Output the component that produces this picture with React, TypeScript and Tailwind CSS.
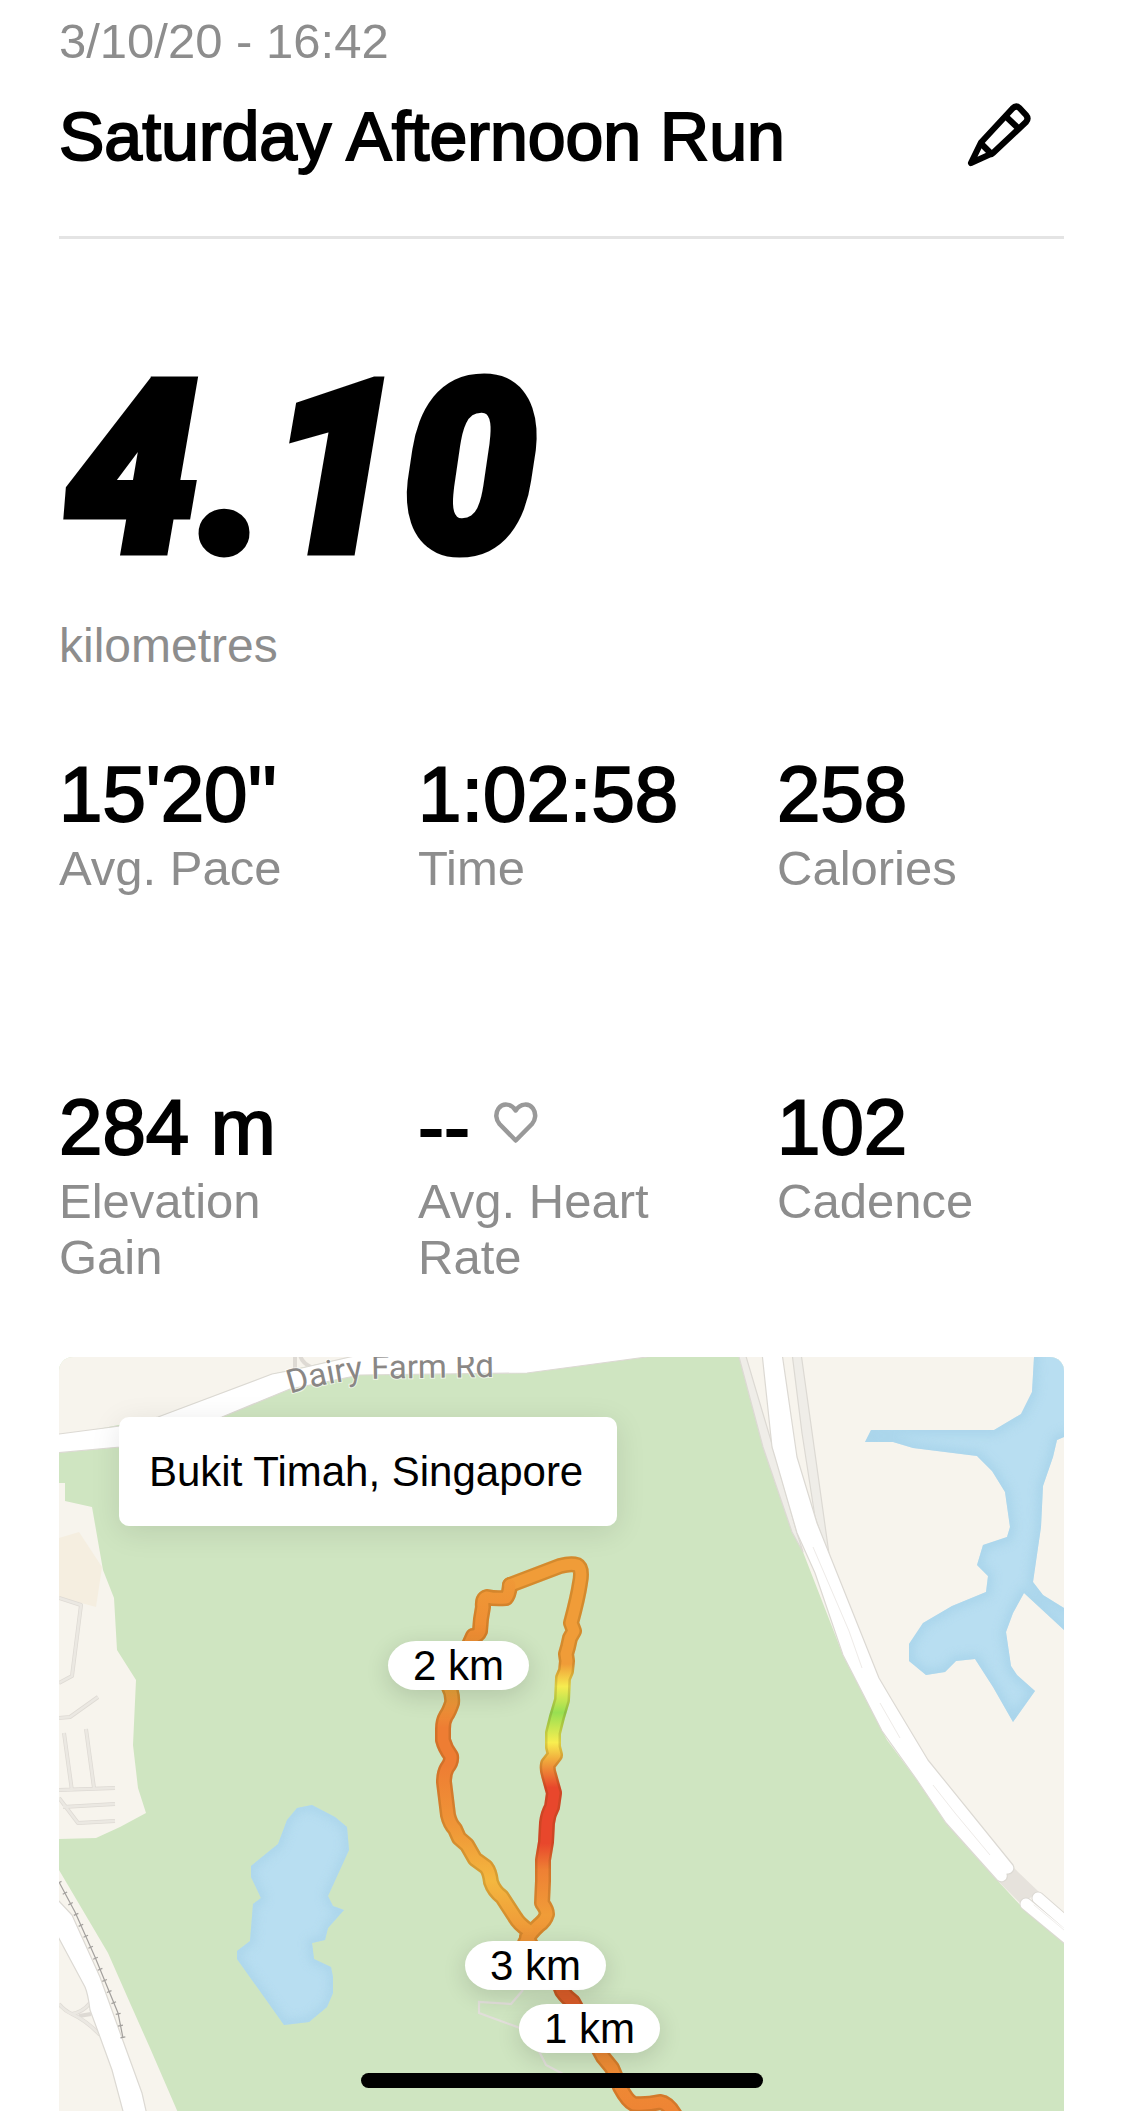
import type { ReactNode } from 'react'

interface Stat {
  label: string
  value: string
  icon?: ReactNode
}

interface Marker {
  label: string
  position: string
}

const stats: Stat[] = [
  { label: 'Avg. Pace', value: "15'20''" },
  { label: 'Time', value: '1:02:58' },
  { label: 'Calories', value: '258' },
  { label: 'Elevation Gain', value: '284 m' },
  { label: 'Avg. Heart Rate', value: '--', icon: <HeartIcon /> },
  { label: 'Cadence', value: '102' },
]

const markers: Marker[] = [
  { label: '2 km', position: 'left-[329px] top-[284px]' },
  { label: '3 km', position: 'left-[406px] top-[584px]' },
  { label: '1 km', position: 'left-[460px] top-[647px]' },
]

const LAKE =
  'M238 451L253 448L276 460L288 470L290 493L269 539L274 549L285 553L269 571L266 583L253 586L255 602L272 610L274 620V636L268 650L250 665L225 668L178 602V594L191 584L194 547L202 541L192 520V509L219 487L228 463Z'

const RESERVOIR =
  'M975 -20V0L973 35L962 57L935 73H812L806 85H834L854 91L918 99L933 114L946 135L951 170L948 180L924 188L918 208L929 219L927 235L893 249L864 266L850 287V304L867 318L886 315L897 304L916 302L934 330L954 365L976 334L958 318L952 309L947 275L954 256L965 236L1005 273L1025 290V262L1005 251L984 238L974 225L982 170L984 129L994 100L998 83L1005 80L1025 74V-20Z'

const EXPRESSWAY =
  'M703 -4L713 90L716 100L738 176L756 216L784 298L823 374L858 423L887 466L938 523A6 6 0 0 0 948 517A6 6 0 0 0 954 508L869 403L833 343L820 321L774 206L758 166L738 100L723 -4Z'

const DAIRY_FARM_RD =
  'M-4 77L0 77L61 69L99 60L213 17L234 13L291 0L310 -4H612L588 0L468 16L301 18L231 32L163 60L61 90L-4 96Z'

// the run is drawn in three pieces so that each can carry its own pace gradient
const ROUTE_LOWER =
  'M468 580Q472 590 486 607T503 634Q508 641 514 645L544 700L553 711L561 730Q569 745 575 747Q588 748 601 745Q609 746 616 758'
const ROUTE_LEFT =
  'M451 228Q450 238 447 241Q436 242 428 240Q423 241 424 250L422 262L421 274Q419 279 414 279L400 310L389 328Q394 337 393 346Q390 355 387 359Q384 364 384 372V383Q386 391 392 399Q393 405 388 411Q385 416 385 425L389 458Q391 467 396 472L400 481L408 488L416 502L427 510Q431 515 432 525Q435 534 443 540L456 560Q460 567 469 573'
const ROUTE_RIGHT =
  'M451 228L501 209Q512 206 518 208Q524 211 521 226Q519 240 512 266L515 274L511 281L509 290L507 297L508 304L507 314L504 321L503 343L498 360L494 376V390L496 398L489 407Q488 412 490 418L495 436L493 450Q489 457 488 466L487 485L484 503V524L483 546Q488 553 488 557Q486 564 480 568Q470 577 466 586'

function PencilIcon() {
  return (
    <svg viewBox="16 13 66 66" className="size-[66px]" fill="none" stroke="currentColor" strokeWidth="6.200" strokeLinejoin="round" strokeLinecap="round">
      <path d="M21 73L31 52.500L62.500 18.500Q66 15 69.500 18L76 25Q79 28.500 76 32L43 63Z" />
      <path d="M57.500 28L68.500 38.500M31.500 54L41.500 64" />
    </svg>
  )
}

function HeartIcon() {
  return (
    <svg viewBox="0 0 44 42" className="mb-2 h-[42px] w-[44px]" fill="none" stroke="#999999" strokeWidth="4.500" strokeLinejoin="round">
      <path d="M21.700 8.500C17 1 8.500 1 4.500 6.500C1 11.500 2 18 5.500 22L21.700 38.500L38 22C41.500 18 42.500 11.500 39 6.500C35 1 26.500 1 21.700 8.500Z" />
    </svg>
  )
}

function StatItem({ stat }: { stat: Stat }) {
  return (
    <div className="flex flex-col-reverse justify-end gap-0.5">
      <dt className="text-[49px] leading-14 text-[#8d8d8d]">{stat.label}</dt>
      <dd className="flex items-center gap-6 text-[78px] leading-[88px] [-webkit-text-stroke:2px_black]">
        {stat.value}
        {stat.icon}
      </dd>
    </div>
  )
}

function Route({ d, stroke }: { d: string; stroke: string }) {
  return (
    <>
      <path d={d} stroke={stroke} strokeWidth="16" />
      <path d={d} stroke="#5a3c00" strokeOpacity="0.18" strokeWidth="16" />
    </>
  )
}

function MapCanvas() {
  return (
    <svg viewBox="0 0 1005 754" preserveAspectRatio="xMidYMin slice" className="block size-full" aria-hidden="true">
      <defs>
        <clipPath id="lake-clip"><path d={LAKE} /></clipPath>
        <clipPath id="reservoir-clip"><path d={RESERVOIR} /></clipPath>
        <filter id="shore" x="-10%" y="-10%" width="120%" height="120%">
          <feGaussianBlur stdDeviation="5" />
        </filter>
        <path id="dairy-farm-rd" d="M231 37Q270 25 303 22L490 19" />
        <linearGradient id="pace-left" gradientUnits="userSpaceOnUse" x1="0" y1="206" x2="0" y2="580">
          <stop offset="0" stopColor="#f09c38" />
          <stop offset="0.19" stopColor="#ee8d33" />
          <stop offset="0.34" stopColor="#eca33a" />
          <stop offset="0.44" stopColor="#ee7d33" />
          <stop offset="0.54" stopColor="#ee7d33" />
          <stop offset="0.7" stopColor="#ef9537" />
          <stop offset="0.85" stopColor="#f4b73f" />
          <stop offset="1" stopColor="#ee9537" />
        </linearGradient>
        <linearGradient id="pace-right" gradientUnits="userSpaceOnUse" x1="0" y1="206" x2="0" y2="580">
          <stop offset="0" stopColor="#f09c38" />
          <stop offset="0.27" stopColor="#f09c38" />
          <stop offset="0.33" stopColor="#f6ec50" />
          <stop offset="0.4" stopColor="#98df52" />
          <stop offset="0.48" stopColor="#f8ee50" />
          <stop offset="0.53" stopColor="#f0a53b" />
          <stop offset="0.6" stopColor="#e8472c" />
          <stop offset="0.75" stopColor="#e8472c" />
          <stop offset="0.82" stopColor="#ee8034" />
          <stop offset="0.94" stopColor="#f09c38" />
          <stop offset="1" stopColor="#ee9537" />
        </linearGradient>
        <linearGradient id="pace-lower" gradientUnits="userSpaceOnUse" x1="0" y1="580" x2="0" y2="754">
          <stop offset="0" stopColor="#ee9537" />
          <stop offset="0.3" stopColor="#df5f2a" />
          <stop offset="0.42" stopColor="#df5f2a" />
          <stop offset="0.7" stopColor="#ef8d35" />
          <stop offset="1" stopColor="#ee8434" />
        </linearGradient>
      </defs>

      <rect x="-20" y="-20" width="1045" height="800" fill="#cfe5c1" />

      {/* Built-up areas */}
      <g fill="#f7f4ed">
        <path d="M-4 -4H310L213 17L99 60L0 80H-4Z" />
        <path d="M-4 126H6V144L33 150L44 213L55 241L58 293L77 323L74 388L79 431L87 456L61 470L37 481L-4 482Z" />
        <path d="M-4 505L0 513L49 596L71 646L91 691L120 758H-4Z" />
        <path d="M679 -4L704 90L733 175L744 195L784 298L828 383L858 423L887 466L938 523L963 550L1025 600V-20H679Z" />
      </g>
      <path d="M0 181L20 175L43 210L37 250L0 240Z" fill="#f5eee0" />

      {/* Side streets on the left */}
      <g fill="none" strokeLinejoin="round">
        <g stroke="#dedad4" strokeWidth="4">
          <path d="M0 241L22 248L13 319L0 326M0 361L11 360L39 340M5 376L13 434M27 372L35 431M0 433L56 431M4 450L56 447M0 441L19 466L56 464" />
          <path d="M0 647Q6 654 13 657Q28 664 41 678M13 657Q24 655 31 646M20 659L32 657M236 -2V14M241 -2Q243 6 252 10" />
        </g>
        <g stroke="#ebe8e2" strokeWidth="2.500">
          <path d="M0 241L22 248L13 319L0 326M0 361L11 360L39 340M5 376L13 434M27 372L35 431M0 433L56 431M4 450L56 447M0 441L19 466L56 464" />
          <path d="M0 647Q6 654 13 657Q28 664 41 678M13 657Q24 655 31 646" />
        </g>
      </g>

      {/* Roads */}
      <g stroke="#dcd9d3" strokeWidth="1.200" strokeLinejoin="round">
        <path d={DAIRY_FARM_RD} fill="#ffffff" />
        <path d="M-4 540L13 558L41 620L63 681L83 736L88 758H65L53 713L41 680L31 653Q29 637 26 630L-4 574Z" fill="#ffffff" />
        <path d="M679 -4H686L713 87L738 176L744 195L733 175L704 90Z" fill="#efede8" />
        <path d="M733 -4H742L771 204L756 160L743 76Z" fill="#efede8" />
        <path d="M940 525L954 510L980 535L962 547Z" fill="#e6e2dc" stroke="none" />
        <path d={EXPRESSWAY} fill="#ffffff" />
      </g>
      <path d="M754 190L790 274L803 311M821 346L841 381M874 428L896 456L931 498" fill="none" stroke="#eeebe8" strokeWidth="1" />
      <g fill="none" strokeLinecap="round">
        <path d="M979 541L1025 581M967 547L1025 595" stroke="#dcd9d3" strokeWidth="13" />
        <path d="M979 541L1025 581M967 547L1025 595" stroke="#ffffff" strokeWidth="11" />
        <path d="M975 548L1005 573" stroke="#f0eeeb" strokeWidth="1" />
      </g>

      {/* Railway */}
      <g fill="none" stroke="#a3a09d">
        <path d="M0 525L16 555L36 600L59 656L64 681" strokeWidth="1.200" />
        <path d="M0 525L16 555L36 600L59 656L64 681" strokeWidth="5" strokeDasharray="1.200 10.800" />
      </g>

      {/* Water */}
      <path d={LAKE} fill="#b8def1" />
      <g clipPath="url(#lake-clip)">
        <path d={LAKE} fill="none" stroke="#a8d3e9" strokeWidth="9" filter="url(#shore)" opacity="0.8" />
      </g>
      <path d={RESERVOIR} fill="#b8def1" />
      <g clipPath="url(#reservoir-clip)">
        <path d={RESERVOIR} fill="none" stroke="#a5d2e9" strokeWidth="10" filter="url(#shore)" opacity="0.8" />
      </g>

      {/* Footpath */}
      <path d="M464 633L452 647L420 645V656L461 671L481 696L487 708L504 717" fill="none" stroke="#e2dfda" strokeWidth="2.200" />

      <text className="font-['Roboto'] text-[33px]" fill="#8a8785" stroke="#ffffff" strokeOpacity="0.6" strokeWidth="2" paintOrder="stroke">
        <textPath href="#dairy-farm-rd">Dairy Farm Rd</textPath>
      </text>

      {/* Route */}
      <g fill="none" strokeLinejoin="round" strokeLinecap="round">
        <Route d={ROUTE_LOWER} stroke="url(#pace-lower)" />
        <Route d={ROUTE_RIGHT} stroke="url(#pace-right)" />
        <Route d={ROUTE_LEFT} stroke="url(#pace-left)" />
        <path d={ROUTE_LOWER} stroke="url(#pace-lower)" strokeWidth="11" />
        <path d={ROUTE_RIGHT} stroke="url(#pace-right)" strokeWidth="11" />
        <path d={ROUTE_LEFT} stroke="url(#pace-left)" strokeWidth="11" />
      </g>
    </svg>
  )
}

export default function App() {
  return (
    <main className="bg-white pt-[13px] pr-[60px] pl-[59px] font-['Liberation_Sans',Arial,sans-serif] text-black">
      {/* Header */}
      <header className="border-b-[3px] border-[#e4e4e4] pb-[60px]">
        <p className="text-[49px] leading-14 text-[#8d8d8d]">3/10/20 - 16:42</p>
        <div className="mt-[27px] flex items-center justify-between pr-8">
          <h1 className="text-[68px] leading-[80px] [-webkit-text-stroke:2px_black]">Saturday Afternoon Run</h1>
          <button type="button" aria-label="Edit title">
            <PencilIcon />
          </button>
        </div>
      </header>

      {/* Distance */}
      <section className="mt-[112px]">
        <p className="pl-1.5 font-['Roboto'] text-[238px] leading-none font-black italic [-webkit-text-stroke:9px_black]">4.10</p>
        <p className="mt-[29px] text-[48px] leading-14 text-[#8d8d8d]">kilometres</p>
      </section>

      {/* Stats */}
      <dl className="mt-[76px] grid grid-cols-3 gap-x-[72px]">
        {stats.slice(0, 3).map((stat) => (
          <StatItem key={stat.label} stat={stat} />
        ))}
      </dl>
      <dl className="mt-[187px] grid grid-cols-3 gap-x-[72px]">
        {stats.slice(3).map((stat) => (
          <StatItem key={stat.label} stat={stat} />
        ))}
      </dl>

      {/* Map */}
      <section className="relative mt-[72px] h-[754px] overflow-hidden rounded-t-[14px]" aria-label="Route map">
        <MapCanvas />
        <div className="absolute top-[60px] left-[60px] rounded-[10px] bg-white py-[30px] pr-[34px] pl-[30px] text-[42px] leading-[49px] shadow-[0_6px_30px_rgba(0,0,0,0.1)]">
          Bukit Timah, Singapore
        </div>
        {markers.map((marker) => (
          <div
            key={marker.label}
            className={`absolute rounded-[28px/50%] bg-white px-[25px] text-[42px] leading-[49px] shadow-[0_6px_24px_rgba(0,0,0,0.14)] ${marker.position}`}
          >
            {marker.label}
          </div>
        ))}
      </section>

      {/* Home indicator */}
      <div className="fixed bottom-[23px] left-1/2 h-[15px] w-[402px] -translate-x-1/2 rounded-full bg-black" />
    </main>
  )
}
